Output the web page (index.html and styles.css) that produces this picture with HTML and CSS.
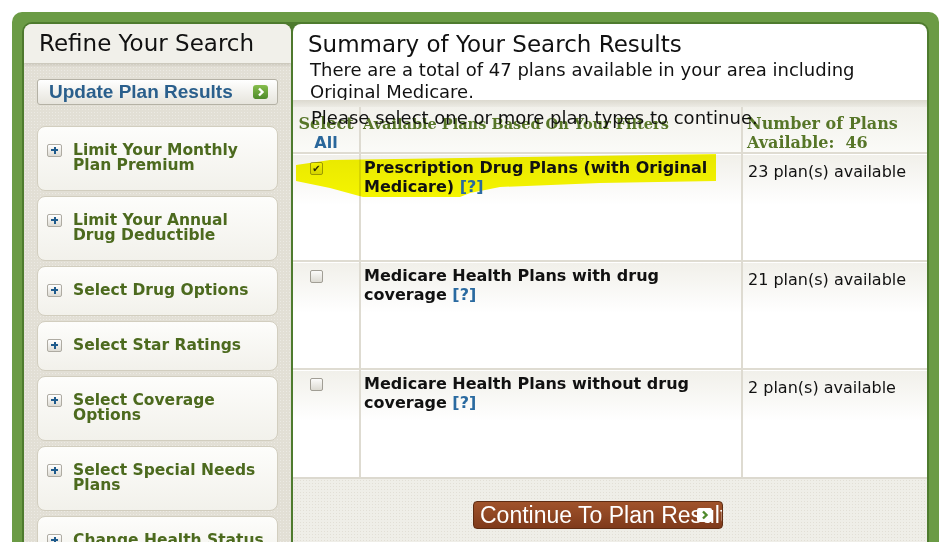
FILE: index.html
```html
<!DOCTYPE html>
<html lang="en">
<head>
<meta charset="utf-8">
<title>Refine Your Search</title>
<link rel="stylesheet" href="styles.css">
</head>
<body>
<div class="frame">
  <div class="inner">
    <aside class="refine">
      <div class="refine-head"><h2>Refine Your Search</h2></div>
      <button class="update" type="button">
        <span>Update Plan Results</span>
        <span class="go"><svg width="15" height="14" viewBox="0 0 15 14"><path d="M6 3.5 L9.5 7 L6 10.5" fill="none" stroke="#fff" stroke-width="2.4"/></svg></span>
      </button>
      <div class="cards">
        <div class="card"><span class="plus"></span><span class="label">Limit Your Monthly<br>Plan Premium</span></div>
        <div class="card"><span class="plus"></span><span class="label">Limit Your Annual<br>Drug Deductible</span></div>
        <div class="card"><span class="plus"></span><span class="label">Select Drug Options</span></div>
        <div class="card"><span class="plus"></span><span class="label">Select Star Ratings</span></div>
        <div class="card"><span class="plus"></span><span class="label">Select Coverage<br>Options</span></div>
        <div class="card"><span class="plus"></span><span class="label">Select Special Needs<br>Plans</span></div>
        <div class="card"><span class="plus"></span><span class="label">Change Health Status</span></div>
      </div>
    </aside>
    <main class="results">
      <header class="summary">
        <h1>Summary of Your Search Results</h1>
        <p>There are a total of 47 plans available in your area including<br>Original Medicare.</p>
      </header>
      <div class="band"></div>
      <p class="prompt">Please select one or more plan types to continue.</p>
      <table class="plans">
        <colgroup><col class="c1"><col class="c2"><col class="c3"></colgroup>
        <thead>
          <tr>
            <th class="sel">Select<br><a class="all">All</a></th>
            <th class="mid">Available Plans Based On Your Filters</th>
            <th>Number of Plans<br>Available:&nbsp; 46</th>
          </tr>
        </thead>
        <tbody>
          <tr>
            <td class="sel"><input class="check" type="checkbox" checked></td>
            <td class="name">Prescription Drug Plans (with Original<br>Medicare) <a class="help">[?]</a></td>
            <td class="count">23 plan(s) available</td>
          </tr>
          <tr>
            <td class="sel"><input class="check" type="checkbox"></td>
            <td class="name">Medicare Health Plans with drug<br>coverage <a class="help">[?]</a></td>
            <td class="count">21 plan(s) available</td>
          </tr>
          <tr>
            <td class="sel"><input class="check" type="checkbox"></td>
            <td class="name">Medicare Health Plans without drug<br>coverage <a class="help">[?]</a></td>
            <td class="count">2 plan(s) available</td>
          </tr>
        </tbody>
      </table>
      <div class="actions">
        <button class="continue" type="button">Continue To Plan Results<span class="arrow"><svg width="15" height="14" viewBox="0 0 15 14"><path d="M6 3.5 L9.5 7 L6 10.5" fill="none" stroke="#4f8a2b" stroke-width="2.4"/></svg></span></button>
      </div>
      <svg class="marker" width="634" height="200" viewBox="0 0 634 200">
        <polygon points="3,141 37,136 423,130 423,157 307,159 207,163 177,169 167,173 70,173 37,164 3,157" fill="#f7f700"/>
      </svg>
    </main>
  </div>
</div>
</body>
</html>
```
FILE: styles.css
```css
html, body {
  margin: 0;
  padding: 0;
  background: #fff;
}
body {
  font-family: "DejaVu Sans", Verdana, sans-serif;
  color: #111;
  overflow: hidden;
}
.frame {
  margin: 12px 0 0 12px;
  width: 927px;
  height: 530px;
  box-sizing: border-box;
  background: #6b9b45;
  border-radius: 10px 10px 0 0;
  padding: 10px 10px 0;
}
.inner {
  display: flex;
  gap: 2px;
  height: 520px;
  box-sizing: border-box;
  padding: 2px 2px 0;
  background: #4e7b2e;
  border-radius: 10px 10px 0 0;
  overflow: hidden;
}

/* left panel */
.refine {
  width: 267px;
  flex: none;
  background-color: #e2dfd5;
  background-image: radial-gradient(rgba(255,255,255,.35) 0.6px, transparent 0.8px);
  background-size: 3px 3px;
  border-radius: 8px 8px 0 0;
}
.refine-head {
  height: 39px;
  box-sizing: border-box;
  padding-left: 15px;
  background: #f1f0ea;
  border-radius: 8px 8px 0 0;
  box-shadow: 0 2px 3px rgba(90, 80, 60, .18);
}
.refine-head h2 {
  margin: 0;
  font: normal 23px/39px "DejaVu Sans", Verdana, sans-serif;
  color: #111;
}
.update {
  display: flex;
  align-items: center;
  justify-content: space-between;
  width: 241px;
  height: 26px;
  margin: 16px 13px 0;
  padding: 0 9px 0 11px;
  box-sizing: border-box;
  border: 1px solid #b4b1a5;
  border-radius: 3px;
  background: linear-gradient(#ffffff, #e6e4dc);
  font: bold 19px "Liberation Sans", Arial, sans-serif;
  color: #2a5f8c;
  cursor: pointer;
}
.go {
  display: flex;
  width: 15px;
  height: 14px;
  border-radius: 3px;
  background: linear-gradient(#86bd4c, #4e8a2a);
}
.cards {
  display: flex;
  flex-direction: column;
  gap: 5px;
  margin: 21px 13px 0;
}
.card {
  display: flex;
  align-items: flex-start;
  gap: 11px;
  padding: 16px 9px 17px;
  border: 1px solid #d2cebf;
  border-radius: 8px;
  background: linear-gradient(#fdfdfb, #f2f1eb);
}
.plus {
  position: relative;
  flex: none;
  width: 15px;
  height: 13px;
  box-sizing: border-box;
  margin-top: 1px;
  border: 1px solid #aeaba2;
  border-radius: 2px;
  background: linear-gradient(#ffffff, #dedcd4);
}
.plus::before,
.plus::after {
  content: "";
  position: absolute;
  background: #1f5b8c;
}
.plus::before {
  left: 3px;
  top: 4px;
  width: 7px;
  height: 2px;
}
.plus::after {
  left: 5.5px;
  top: 1.5px;
  width: 2px;
  height: 7px;
}
.label {
  font: bold 15.5px/15px "DejaVu Sans", Verdana, sans-serif;
  color: #4c6a1e;
}

/* right panel */
.results {
  position: relative;
  width: 634px;
  flex: none;
  display: flex;
  flex-direction: column;
  background: #fff;
  border-radius: 8px 8px 0 0;
}
.summary {
  height: 76px;
  box-sizing: border-box;
  padding: 7px 15px 0;
}
.summary h1 {
  margin: 0;
  font: normal 23px/26px "DejaVu Sans", Verdana, sans-serif;
  color: #111;
}
.summary p {
  margin: 2px 0 0 2px;
  font: 18px/22px "DejaVu Sans", Verdana, sans-serif;
  color: #111;
  white-space: nowrap;
}
.band {
  height: 7px;
  background: linear-gradient(#dcd9cf, #ecebe4);
}
.prompt {
  position: relative;
  z-index: 2;
  margin: 1px 0 -21px 18px;
  font: 18px/20px "DejaVu Sans", Verdana, sans-serif;
  color: #111;
  white-space: nowrap;
}
.plans {
  width: 634px;
  border-collapse: collapse;
  table-layout: fixed;
}
.c1 { width: 67px; }
.c2 { width: 382px; }
.c3 { width: 185px; }
.plans th {
  height: 45px;
  box-sizing: border-box;
  padding: 7px 4px 0;
  vertical-align: top;
  text-align: left;
  font: bold 16px/19px "DejaVu Serif", Georgia, serif;
  color: #577628;
}
.plans th.mid {
  font-size: 14.5px;
  padding-left: 2px;
}
.plans thead tr {
  background: linear-gradient(#f2f1eb, #fbfbf8);
}
.plans th + th,
.plans td + td {
  border-left: 2px solid #dedbd1;
}
.plans th.sel {
  text-align: center;
  padding: 7px 0 0;
}
.all {
  font-family: "DejaVu Sans", Verdana, sans-serif;
  color: #2a679b;
}
.plans tbody tr {
  height: 108px;
  border-top: 2px solid #dfdcd2;
  background: linear-gradient(#f1f0ea, #ffffff 50px);
}
.plans td {
  vertical-align: top;
  box-sizing: border-box;
}
.plans td.sel {
  padding: 8px 0 0 17px;
}
.check {
  appearance: none;
  -webkit-appearance: none;
  display: block;
  margin: 0;
  width: 13px;
  height: 13px;
  box-sizing: border-box;
  border: 1px solid #a19e95;
  border-radius: 2px;
  background: linear-gradient(#fbfbfa, #dcdad2);
}
.check:checked::after {
  content: "\2714";
  display: block;
  font: 10px/11px "DejaVu Sans", sans-serif;
  text-align: center;
  color: #2a2a22;
}
.plans td.name {
  padding: 4px 3px 0;
  font: bold 16px/19px "DejaVu Sans", Verdana, sans-serif;
  color: #111;
  position: relative;
  z-index: 2;
}
.help {
  color: #2a6aa0;
}
.plans td.count {
  padding: 8px 4px 0 5px;
  font: 16px/19px "DejaVu Sans", Verdana, sans-serif;
  color: #111;
}
.actions {
  flex: 1;
  display: flex;
  justify-content: center;
  align-items: flex-start;
  padding: 22px 24px 0 0;
  border-top: 2px solid #dcd9cf;
  background-color: #efeee8;
  background-image: radial-gradient(rgba(200,196,180,.35) 0.6px, transparent 0.8px);
  background-size: 3px 3px;
}
.continue {
  position: relative;
  width: 250px;
  height: 28px;
  padding: 0 0 0 6px;
  box-sizing: border-box;
  overflow: hidden;
  white-space: nowrap;
  text-align: left;
  border: 1px solid #5e2c12;
  border-radius: 4px;
  background: linear-gradient(#a0532b, #7f3a1b);
  font: 23px/26px "Liberation Sans", Arial, sans-serif;
  color: #fff;
  cursor: pointer;
}
.arrow {
  position: absolute;
  left: 223px;
  top: 6px;
  display: flex;
  width: 15px;
  height: 14px;
  border-radius: 2px;
  background: #fff;
}
.marker {
  position: absolute;
  left: 0;
  top: 0;
  z-index: 1;
  mix-blend-mode: multiply;
  pointer-events: none;
}
```
